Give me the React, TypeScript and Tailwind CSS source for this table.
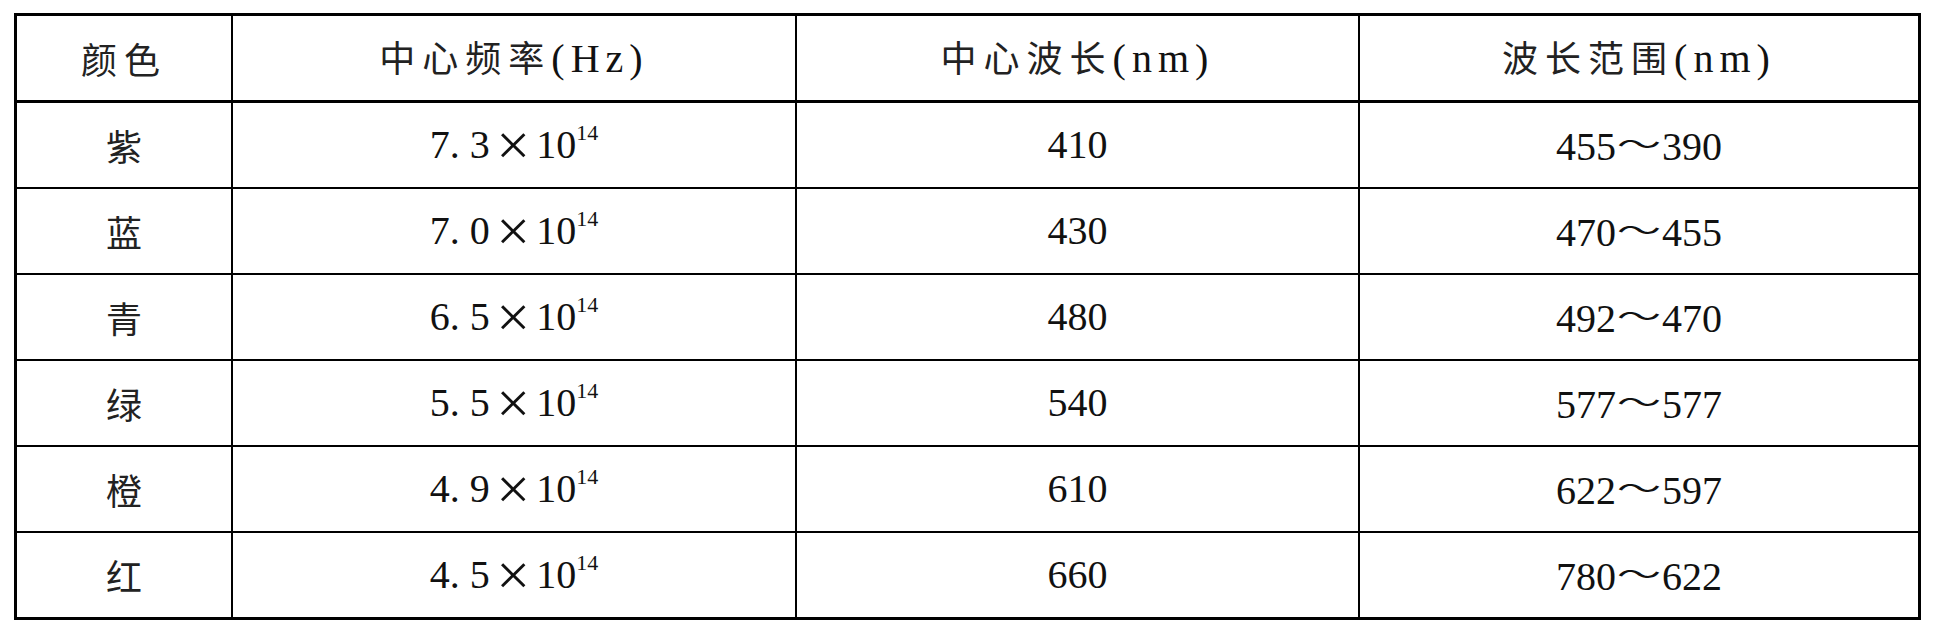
import React from "react";

const rows = [
  { color: "紫", m: "7.3", wave: "410", range: ["455", "390"] },
  { color: "蓝", m: "7.0", wave: "430", range: ["470", "455"] },
  { color: "青", m: "6.5", wave: "480", range: ["492", "470"] },
  { color: "绿", m: "5.5", wave: "540", range: ["577", "577"] },
  { color: "橙", m: "4.9", wave: "610", range: ["622", "597"] },
  { color: "红", m: "4.5", wave: "660", range: ["780", "622"] },
];

// latin/digits in a Times-metric serif, CJK falls through to Noto
const latin = "font-[Liberation_Serif,Noto_Sans_CJK_SC,serif]";

function Head({ cn, unit }: { cn: string; unit?: string }) {
  return (
    <span className="leading-none whitespace-nowrap">
      <span className="text-[36px] tracking-[7px] text-[#222]">{cn}</span>
      {unit && <span className={`text-[40px] tracking-[6px] ${latin}`}>({unit})</span>}
    </span>
  );
}

function Freq({ m }: { m: string }) {
  const [a, b] = m.split(".");
  return (
    <span className={`text-[40px] leading-none whitespace-nowrap ${latin}`}>
      {a}
      <span className="mr-[10px]">.</span>
      {b}
      <span className="inline-block mx-[12px] scale-[1.5] font-light">×</span>
      10
      <sup className="text-[22px] top-[-18px]">14</sup>
    </span>
  );
}

function Range({ r }: { r: string[] }) {
  return (
    <span className={`text-[40px] leading-none whitespace-nowrap ${latin}`}>
      {r[0]}
      <span className="inline-block mx-[3px] scale-x-[1.1] scale-y-[0.65] font-['Noto_Sans_CJK_SC']">～</span>
      {r[1]}
    </span>
  );
}

export default function App() {
  const cell = "flex items-center justify-center";
  return (
    <div className="w-[1936px] h-[630px] bg-white pt-[13px] pl-[14px] text-[#111] font-['Noto_Sans_CJK_SC',sans-serif]">
      <div className="w-[1907px] border-[3px] border-black">
        <div className="flex h-[87px] border-b-[3px] border-black">
          <div className={`${cell} w-[214px]`}>
            <Head cn="颜色" />
          </div>
          <div className={`${cell} w-[564px] border-l-2 border-black`}>
            <Head cn="中心频率" unit="Hz" />
          </div>
          <div className={`${cell} w-[563px] border-l-2 border-black`}>
            <Head cn="中心波长" unit="nm" />
          </div>
          <div className={`${cell} flex-1 border-l-2 border-black`}>
            <Head cn="波长范围" unit="nm" />
          </div>
        </div>
        {rows.map((row, i) => (
          <div
            key={i}
            className={`flex ${i < rows.length - 1 ? "h-[86px] border-b-2 border-black" : "h-[84px]"}`}
          >
            <div className={`${cell} w-[214px]`}>
              <span className="text-[36px] leading-none text-[#222]">{row.color}</span>
            </div>
            <div className={`${cell} w-[564px] border-l-2 border-black`}>
              <Freq m={row.m} />
            </div>
            <div className={`${cell} w-[563px] border-l-2 border-black`}>
              <span className={`text-[40px] leading-none ${latin}`}>{row.wave}</span>
            </div>
            <div className={`${cell} flex-1 border-l-2 border-black`}>
              <Range r={row.range} />
            </div>
          </div>
        ))}
      </div>
    </div>
  );
}
